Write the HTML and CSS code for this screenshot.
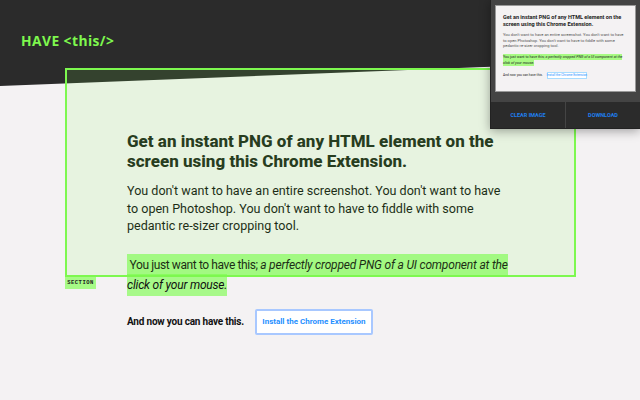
FILE: index.html
```html
<!DOCTYPE html>
<html lang="en">
<head>
<meta charset="utf-8">
<title>Have this</title>
<link rel="stylesheet" href="styles.css">
</head>
<body>
<header class="hero"><div class="logo">HAVE &lt;this/&gt;</div></header>
<main class="content">
  <h1 class="title">Get an instant PNG of any HTML element on the screen using this Chrome Extension.</h1>
  <p class="lead">You don't want to have an entire screenshot. You don't want to have to open Photoshop. You don't want to have to fiddle with some pedantic re-sizer cropping tool.</p>
  <p class="pitch"><span class="mark">&nbsp;You just want to have this; <em class="mark-em">a perfectly cropped PNG of a UI component at the click of your mouse.</em></span></p>
  <div class="cta"><strong class="cta-text">And now you can have this.</strong><a class="cta-btn">Install the Chrome Extension</a></div>
</main>
<div class="selection"><span class="selection-tag">SECTION</span></div>
<aside class="popup">
  <div class="preview">
    <div class="mini-title">Get an instant PNG of any HTML element on the screen using this Chrome Extension.</div>
    <p class="mini-lead">You don't want to have an entire screenshot. You don't want to have to open Photoshop. You don't want to have to fiddle with some pedantic re-sizer cropping tool.</p>
    <p class="mini-pitch"><span class="mini-mark">You just want to have this; <em>a perfectly cropped PNG of a UI component at the click of your mouse.</em></span></p>
    <div class="mini-cta"><span>And now you can have this.</span><a class="mini-btn">Install the Chrome Extension</a></div>
  </div>
  <div class="popup-actions"><a class="action">CLEAR IMAGE</a><a class="action">DOWNLOAD</a></div>
</aside>
</body>
</html>
```
FILE: styles.css
```css
* { box-sizing: border-box; }
html, body { margin: 0; height: 100%; }
body { width: 640px; height: 400px; overflow: hidden; position: relative; background: #f4f2f3; font-family: Roboto, sans-serif; color: #111; }
.hero { height: 86px; background: #2b2b2b; clip-path: polygon(0 0, 100% 0, 100% 61px, 0 86px); padding: 33px 0 0 21px; }
.logo { font: bold 13.8px/16px "Open Sans", sans-serif; letter-spacing: .45px; color: #7ef84e; }
.content { padding: 45px 0 0 127px; width: 510px; }
.title { margin: 0; width: 372px; font-size: 17px; line-height: 20px; font-weight: 800; color: #1c261a; }
.lead { margin: 11px 0 0; width: 376px; font-size: 12.55px; line-height: 17.5px; }
.pitch { margin: 20px 0 0; width: 385px; font-size: 12px; line-height: 20px; }
.mark { background: rgba(126, 252, 80, .65); padding: 4px 0; letter-spacing: -.4px; }
.mark-em { letter-spacing: -.2px; }
.cta { margin-top: 14px; display: flex; align-items: center; gap: 11px; }
.cta-text { font-size: 10px; font-weight: 700; letter-spacing: -.2px; }
.cta-btn { width: 118px; height: 26px; display: flex; align-items: center; justify-content: center; background: #fff; border: 2px solid #a8c8ff; border-radius: 2px; color: #1f8fff; font-size: 8px; font-weight: 700; white-space: nowrap; }
.selection { position: absolute; left: 65px; top: 68px; width: 511px; height: 209px; border: 2px solid #7df84f; background: rgba(130, 255, 70, .11); }
.selection-tag { position: absolute; left: -2px; top: 207px; width: 31px; height: 12px; background: #a6fb86; font: bold 5.5px/12px "Liberation Mono", monospace; letter-spacing: .5px; text-align: center; color: #222; }
.popup { position: absolute; left: 490px; top: 0; width: 150px; height: 129px; background: #444; box-shadow: 0 2px 10px rgba(0,0,0,.35); border: 1px solid #222; border-width: 0 0 1px 1px; display: flex; flex-direction: column; }
.preview { margin: 5px 4px 0 4px; height: 87px; background: #f4f2f3; border: 1px solid #999; padding: 8px 6px 0 7px; color: #222; }
.mini-title { font-size: 5.5px; line-height: 7px; font-weight: 700; width: 126px; }
.mini-lead { margin: 4px 0 0; font-size: 4.05px; line-height: 5.5px; color: #555; width: 124px; }
.mini-pitch { margin: 5px 0 0; font-size: 3.6px; line-height: 6.5px; width: 127px; }
.mini-mark { background: #a8fb84; padding: 1px 0; }
.mini-cta { margin-top: 5px; display: flex; align-items: center; gap: 4px; font-size: 3.3px; }
.mini-btn { width: 40px; height: 7px; display: flex; align-items: center; justify-content: center; background: #fff; border: 1px solid #a8dcff; color: #1f8fff; font-size: 3.2px; white-space: nowrap; }
.popup-actions { margin-top: auto; height: 26px; display: flex; background: #2b2b2b; }
.action { flex: 1; display: flex; align-items: center; justify-content: center; color: #1f7fef; font-size: 5.5px; font-weight: 700; }
.action + .action { border-left: 1px solid #444; }
```
